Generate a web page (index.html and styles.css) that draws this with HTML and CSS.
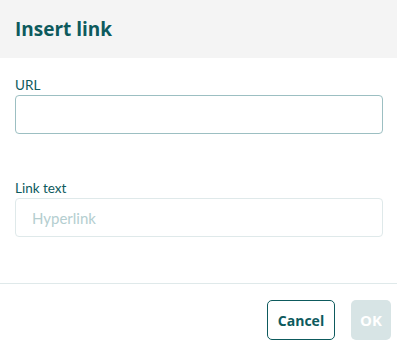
FILE: index.html
```html
<!DOCTYPE html>
<html lang="en">
<head>
    <meta charset="UTF-8">
    <meta name="viewport" content="width=device-width, initial-scale=1.0">
    <title>Insert link</title>
    <link rel="stylesheet" href="styles.css">
</head>
<body>
    <div class="dialog">
        <div class="dialog-header">
            <h1>Insert link</h1>
        </div>

        <div class="dialog-body">
            <div class="field">
                <label for="url">URL</label>
                <input type="text" id="url" class="input input-focus">
            </div>
            <div class="field">
                <label for="linkText">Link text</label>
                <input type="text" id="linkText" class="input" placeholder="Hyperlink">
            </div>
        </div>

        <div class="dialog-footer">
            <button class="btn btn-outline">Cancel</button>
            <button class="btn btn-disabled" disabled>OK</button>
        </div>
    </div>
</body>
</html>
```

FILE: styles.css
```css
:root {
    --teal: #0d5a5d;
    --header-bg: #f4f4f4;
    --border-light: #dfe9ea;
    --border-focus: #9cbfc2;
}

* {
    margin: 0;
    padding: 0;
    box-sizing: border-box;
}

body {
    font-family: Lato, 'Open Sans', sans-serif;
    background: #ffffff;
    color: var(--teal);
    width: 397px;
    height: 354px;
    overflow: hidden;
}

.dialog {
    display: flex;
    flex-direction: column;
    height: 100%;
}

.dialog-header {
    background: var(--header-bg);
    height: 58px;
    padding: 0 15px;
    display: flex;
    align-items: center;
}

.dialog-header h1 {
    font-family: 'Open Sans', sans-serif;
    font-size: 19px;
    font-weight: 700;
}

.dialog-body {
    padding: 19px 14px 0 15px;
    display: flex;
    flex-direction: column;
    gap: 46px;
    height: 226px;
    border-bottom: 1px solid var(--border-light);
}

.field label {
    display: block;
    font-size: 13.5px;
    line-height: 16px;
    margin-bottom: 2px;
}

.input {
    display: block;
    width: 100%;
    height: 39px;
    border: 1px solid var(--border-light);
    border-radius: 4px;
    padding: 0 16px;
    font-family: inherit;
    font-size: 15px;
    color: var(--teal);
    outline: none;
}

.input-focus {
    border-color: var(--border-focus);
}

.input::placeholder {
    color: #b4ced0;
}

.dialog-footer {
    display: flex;
    justify-content: flex-end;
    gap: 16px;
    padding: 16px 6px 0 0;
}

.btn {
    height: 40px;
    border-radius: 5px;
    font-family: 'Open Sans', sans-serif;
    font-size: 14px;
    font-weight: 700;
    padding: 0;
}

.btn-outline {
    width: 68px;
    background: #ffffff;
    color: var(--teal);
    border: 1.5px solid var(--teal);
}

.btn-disabled {
    width: 40px;
    background: #d7e4e5;
    color: #ffffff;
    border: none;
    font-size: 15px;
}
```
